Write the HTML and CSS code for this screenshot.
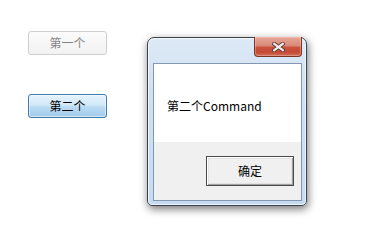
FILE: index.html
```html
<!DOCTYPE html>
<html lang="zh">
<head>
<meta charset="utf-8">
<link rel="stylesheet" href="styles.css">
</head>
<body>
<div class="stage">
  <div class="left">
    <button class="btn btn-disabled" disabled>第一个</button>
    <button class="btn btn-active">第二个</button>
  </div>
  <div class="window">
    <div class="titlebar">
      <div class="close">
        <svg width="13" height="10" viewBox="0 0 13 10">
          <path d="M2.2 1.8 L10.8 8.2 M10.8 1.8 L2.2 8.2" stroke="#5c3a34" stroke-width="4" stroke-linecap="square" fill="none"/>
          <path d="M2.2 1.8 L10.8 8.2 M10.8 1.8 L2.2 8.2" stroke="#f4efee" stroke-width="2.2" stroke-linecap="square" fill="none"/>
        </svg>
      </div>
    </div>
    <div class="frame">
      <div class="client">
        <div class="message">第二个Command</div>
        <div class="actions">
          <button class="ok">确定</button>
        </div>
      </div>
    </div>
  </div>
</div>
</body>
</html>
```
FILE: styles.css
```css
html, body {
  margin: 0;
  padding: 0;
  background: #ffffff;
  width: 370px;
  height: 241px;
  overflow: hidden;
  font-family: "Noto Sans CJK SC", "DejaVu Sans", sans-serif;
  font-size: 12px;
}

.stage {
  display: flex;
  align-items: flex-start;
  padding: 31px 0 0 28px;
}

.left {
  display: flex;
  flex-direction: column;
  gap: 39px;
  width: 79px;
}

.btn {
  box-sizing: border-box;
  width: 79px;
  height: 24px;
  border-radius: 3px;
  font-family: "Noto Sans CJK SC", sans-serif;
  font-size: 12px;
  line-height: 16px;
  padding: 0;
  margin: 0;
}

.btn-disabled {
  border: 1px solid #cdd0d2;
  background: linear-gradient(#fbfbfb, #f2f2f2);
  color: #858585;
}

.btn-active {
  border: 1px solid #3f7cad;
  background: linear-gradient(#e5f3fc 0%, #d2e9f8 45%, #b9dbf2 55%, #a1cbea 100%);
  box-shadow: inset 0 0 0 1px rgba(255,255,255,0.5);
  color: #000;
}

.window {
  box-sizing: border-box;
  width: 160px;
  height: 169px;
  margin: 6px 0 0 40px;
  border: 1px solid #3b434e;
  border-radius: 7px 7px 5px 5px;
  background: linear-gradient(#dde9f6 0%, #cfe0f3 35%, #c6dbf2 100%);
  box-shadow: 1px 3px 9px rgba(0,0,0,0.55), inset 0 0 0 1px rgba(255,255,255,0.65);
  display: flex;
  flex-direction: column;
}

.titlebar {
  height: 25px;
  display: flex;
  justify-content: flex-end;
  align-items: flex-start;
  padding-right: 4px;
}

.close {
  box-sizing: border-box;
  width: 48px;
  height: 20px;
  margin-top: -1px;
  border: 1px solid #7a3528;
  border-top: none;
  border-radius: 0 0 4px 4px;
  background: linear-gradient(#e6a898 0%, #d98a78 45%, #c9533e 55%, #c44a34 80%, #d2705a 100%);
  box-shadow: inset 0 0 0 1px rgba(255,215,205,0.35);
  display: flex;
  align-items: center;
  justify-content: center;
}

.close svg {
  display: block;
}

.frame {
  flex: 1;
  padding: 0 4px 4px 5px;
  display: flex;
}

.client {
  flex: 1;
  border: 1px solid #8497b0;
  display: flex;
  flex-direction: column;
  background: #f0f0f0;
}

.message {
  height: 78px;
  box-sizing: border-box;
  background: #ffffff;
  padding: 34px 0 0 13px;
  line-height: 16px;
  color: #000;
}

.actions {
  flex: 1;
  display: flex;
  justify-content: flex-end;
  align-items: flex-start;
  padding: 14px 7px 0 0;
}

.ok {
  box-sizing: border-box;
  width: 88px;
  height: 30px;
  margin: 0;
  padding: 0;
  border: 1px solid #4b4b4b;
  background: #f0f0f0;
  box-shadow: inset 1px 1px 0 #ffffff, inset -1px -1px 0 #a0a0a0, inset 0 0 0 2px #e3e3e3;
  font-family: "Noto Sans CJK SC", sans-serif;
  font-size: 12px;
  line-height: 16px;
  color: #000;
}
```
